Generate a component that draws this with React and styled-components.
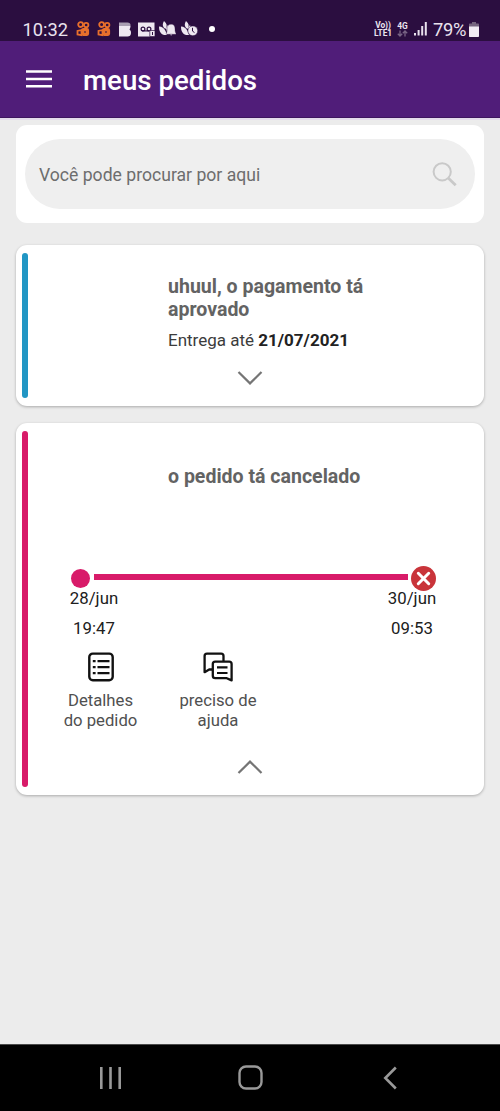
import React from 'react';
import styled, { createGlobalStyle } from 'styled-components';

const GlobalStyle = createGlobalStyle`
* {
    box-sizing: border-box;
}

body {
    margin: 0;
    background: #ececec;
    font-family: Roboto, "Noto Sans", sans-serif;
}

svg {
    display: block;
    flex: none;
}
`;

const Screen = styled.div`
    width: 100%;
    min-height: 1111px;
    display: flex;
    flex-direction: column;
    background: #ececec;
`;

const StatusBar = styled.div`
    height: 41px;
    padding: 17px 21px 0 22.5px;
    display: flex;
    justify-content: space-between;
    align-items: flex-start;
    background: #2b0e40;
    color: #e9e2ee;
`;

const StatusGroup = styled.div`
    height: 24px;
    display: flex;
    align-items: center;
`;

const Clock = styled.span`
    width: 46px;
    margin-right: 7.5px;
    font-size: 18.3px;
    white-space: nowrap;
`;

const Notifications = styled.div`
    display: grid;
    grid-template-columns: 21px 22px 19px 21px 22px 28px 6px;
    align-items: center;
`;

const Dot = styled.div`
    width: 6px;
    height: 6px;
    border-radius: 50%;
    background: #fff;
`;

const Network = styled.div`
    width: ${({ $width }) => $width}px;
    margin-right: ${({ $gap }) => $gap}px;
    display: flex;
    flex-direction: column;
    align-items: center;
    font-size: 8.4px;
    font-weight: 700;
    line-height: 8px;
    letter-spacing: -0.1px;
    white-space: nowrap;
`;

const Percent = styled.span`
    width: 33px;
    margin: 0 3px 0 6px;
    font-size: 18.4px;
    letter-spacing: -0.3px;
`;

const Header = styled.header`
    height: 77px;
    padding: 0 26px;
    display: flex;
    align-items: center;
    gap: 31px;
    background: #501d79;
    border-bottom: 1px solid #3e155f;

    h1 {
        margin: 0;
        padding-top: 3px;
        color: #fff;
        font-size: 27.7px;
        font-weight: 500;
        line-height: 34px;
    }
`;

const Content = styled.main`
    flex: 1;
    padding: 5px 16px 0;
    border-top: 2px solid #e4dcec;
`;

const SearchCard = styled.div`
    height: 98px;
    padding: 14px 9px;
    border-radius: 11px;
    background: #fff;
`;

const SearchField = styled.div`
    height: 70px;
    padding: 1px 18px 0 14px;
    display: flex;
    align-items: center;
    justify-content: space-between;
    border-radius: 35px;
    background: #efefef;
    color: #6d6d6d;
    font-size: 17.6px;
    line-height: 22px;
`;

const Card = styled.section`
    height: ${({ $height }) => $height}px;
    margin-top: ${({ $top }) => $top}px;
    padding: 8px 6px;
    display: flex;
    border-radius: 11px;
    background: #fff;
    box-shadow: 0 1px 3px rgba(0, 0, 0, 0.28);
`;

const Stripe = styled.div`
    width: 6px;
    flex: none;
    border-radius: 3px;
    background: ${({ $color }) => $color};
`;

const CardBody = styled.div`
    flex: 1;
    display: flex;
    flex-direction: column;
    padding-top: ${({ $top }) => $top}px;
`;

const Title = styled.h2`
    width: 230px;
    margin: 0 0 0 140px;
    color: #636363;
    font-size: 19.55px;
    font-weight: 700;
    line-height: 23px;
`;

const Delivery = styled.p`
    margin: 8px 0 0 140px;
    color: #3c3c3c;
    font-size: 17px;
    line-height: 22px;

    b {
        color: #222;
    }
`;

const Toggle = styled.div`
    margin-top: ${({ $top }) => $top}px;
    padding-left: 209px;
`;

const Track = styled.div`
    height: 26px;
    margin: 77px 42px 0 43px;
    display: flex;
    align-items: center;
`;

const StartDot = styled.div`
    width: 19px;
    height: 19px;
    margin-right: 4px;
    border-radius: 50%;
    background: #d81b69;
`;

const Line = styled.div`
    flex: 1;
    height: 6px;
    margin: 0 3px 2px 0;
    background: #d81b69;
`;

const Dates = styled.div`
    margin: -7px 35px 0 35px;
    display: flex;
    justify-content: space-between;
`;

const DateTime = styled.div`
    width: 62px;
    color: #202020;
    font-size: 16.8px;
    line-height: 29.5px;
    text-align: center;
`;

const Actions = styled.div`
    margin: 9px 0 0 22px;
    display: flex;
    gap: 16.5px;
`;

const Action = styled.div`
    width: 101px;
    display: flex;
    flex-direction: column;
    align-items: center;
    gap: 9px;
    color: #505050;
    font-size: 16.7px;
    line-height: 19.5px;
    text-align: center;
`;

const NavBar = styled.nav`
    height: 67px;
    padding-bottom: 1px;
    display: grid;
    grid-template-columns: repeat(3, 140px);
    align-items: center;
    justify-content: center;
    justify-items: center;
    border-top: 1px solid #4b4b4b;
    background: #000;
`;

const AppGlyph = () => (
    <svg width="14" height="16" viewBox="0 0 14 16" fill="none" stroke="#e8702c" strokeWidth="1.8">
        <circle cx="4.6" cy="3.6" r="2.4" />
        <circle cx="10.2" cy="4" r="2.2" />
        <rect x="6" y="8" width="6.2" height="6" rx="1.2" fill="#e8702c" />
        <path d="M5.5 9 1.5 10v3.5l4 .7z" />
        <path d="M8 11h2" stroke="#2b0e40" strokeWidth="1" />
    </svg>
)

const NoteGlyph = () => (
    <svg width="13" height="15" viewBox="0 0 13 15">
        <path d="M0 .5h8.5c2 0 3 1 3 2.5v1H0z" fill="#a99eb2" />
        <path d="M0 4h11.5c0 1.7-.5 2.5-1 3.5 1 .8 1.5 1.7 1.5 3.4 0 2.200-1.500 3.600-3.500 3.600H0z" fill="#eee8f1" />
    </svg>
)

const VoicemailGlyph = () => (
    <svg width="18" height="15" viewBox="0 0 18 15">
        <path d="M0 .5h16.5v14H0z" fill="#eee8f1" />
        <g fill="none" stroke="#2b0e40" strokeWidth="1.2">
            <circle cx="5" cy="7" r="1.9" />
            <circle cx="11" cy="7" r="1.9" />
            <path d="M4 8.9h7" />
        </g>
        <path d="M11.8 8.5H17v6h-5.2z" fill="#eee8f1" stroke="#2b0e40" strokeWidth=".7" />
        <path d="M14.5 10v3" stroke="#2b0e40" />
    </svg>
)

const Leaf = () => (
    <g fill="#eee8f1">
        <path d="M5 0c3 2.5 3.5 5 1.5 8C3.5 6 3 3.5 5 0z" />
        <path d="M0 5.5c3 0 5 1.5 6.5 4.5L8 14H5C1.5 13 0 10 0 5.5z" />
        <path d="M7 7 9 4l1 3-2 4z" />
    </g>
)

const LeafBellGlyph = () => (
    <svg width="17" height="16" viewBox="0 0 17 16">
        <Leaf />
        <path d="M12 3.2c3 0 4 2 4 4.8 0 2 .3 3.3 1 4.500v.8H7.200v-.8C8 11.300 8.200 10 8.200 8c0-2.800 1-4.800 3.800-4.800zM10.800 13.300h2.800l-1.400 1.500z" fill="#eee8f1" stroke="#2b0e40" strokeWidth=".3" />
    </svg>
)

const LeafClockGlyph = () => (
    <svg width="17" height="16" viewBox="0 0 17 16">
        <Leaf />
        <circle cx="11.8" cy="9.8" r="4.9" fill="#eee8f1" stroke="#2b0e40" strokeWidth=".5" />
        <path d="M11.5 6.8v3.3l2 1.5" fill="none" stroke="#2b0e40" strokeWidth="1" />
    </svg>
)

const DataArrows = () => (
    <svg width="11" height="7" viewBox="0 0 11 7" fill="none" stroke="#796585" strokeWidth="1.3">
        <path d="M3 .5V6M.8 3.7 3 6l2.2-2.3M8 6.5V1M5.8 3.3 8 1l2.2 2.3" />
    </svg>
)

const SignalIcon = () => (
    <svg width="13" height="14" viewBox="0 0 13 14" fill="#e9e2ee">
        <rect x="0" y="11" width="2" height="2.5" />
        <rect x="3.6" y="8" width="2" height="5.5" />
        <rect x="7.2" y="4" width="2" height="9.5" />
        <rect x="10.8" y="0" width="2" height="13.5" />
    </svg>
)

const BatteryIcon = () => (
    <svg width="10" height="15" viewBox="0 0 10 15">
        <path d="M3 0h4v1.5h2c.6 0 1 .4 1 1V5H0V2.5c0-.6.4-1 1-1h2z" fill="#75647f" />
        <path d="M0 4.5h10V14c0 .6-.4 1-1 1H1c-.6 0-1-.4-1-1z" fill="#f0eaf3" />
    </svg>
)

const Chevron = ({ up }) => (
    <svg width="26" height="14" viewBox="0 0 26 14" fill="none" stroke="#757575" strokeWidth="2.2">
        <path d={up ? 'M1.5 13 13 1.6 24.5 13' : 'M1.5 1 13 12.4 24.5 1'} />
    </svg>
)

const DetailsIcon = () => (
    <svg width="26" height="30" viewBox="0 0 26 30" fill="none" stroke="#111" strokeWidth="2.4">
        <rect x="1.3" y="1.6" width="23.4" height="26.6" rx="3.5" />
        <path d="M9.5 9.2h12M9.5 15.2h12M9.5 21.2h12M4.8 9.2h2.8M4.8 15.2h2.8M4.8 21.2h2.8" strokeWidth="2.2" />
    </svg>
)

const HelpIcon = () => (
    <svg width="30" height="30" viewBox="0 0 30 30" fill="none" stroke="#111" strokeWidth="2.3" strokeLinejoin="round">
        <path d="M20.5 9V4c0-1.5-.9-2.4-2.4-2.4H4C2.5 1.6 1.6 2.5 1.6 4v16.2l4.6-2.7h3.5" />
        <path d="M12.2 9.7h14c1.5 0 2.4.9 2.4 2.4v16.3l-4.8-2.2H12.2c-1.5 0-2.4-.9-2.4-2.4V12.100c0-1.500.9-2.400 2.400-2.400z" />
        <path d="M14 15.3h10.5M14 21h10.5" strokeWidth="2.2" />
    </svg>
)

const App = () => {
    return (
        <Screen>
            <GlobalStyle />
            <StatusBar>
                <StatusGroup>
                    <Clock>10:32</Clock>
                    <Notifications>
                        <AppGlyph />
                        <AppGlyph />
                        <NoteGlyph />
                        <VoicemailGlyph />
                        <LeafBellGlyph />
                        <LeafClockGlyph />
                        <Dot />
                    </Notifications>
                </StatusGroup>
                <StatusGroup>
                    <Network $width={18} $gap={5}>
                        <span>Vo))</span>
                        <span>LTE1</span>
                    </Network>
                    <Network $width={11} $gap={6}>
                        <span>4G</span>
                        <DataArrows />
                    </Network>
                    <SignalIcon />
                    <Percent>79%</Percent>
                    <BatteryIcon />
                </StatusGroup>
            </StatusBar>
            <Header>
                <svg width="26" height="20" viewBox="0 0 26 20" fill="none" stroke="#fff" strokeWidth="2.6">
                    <path d="M0 2.5h26M0 10h26M0 17.3h26" />
                </svg>
                <h1>meus pedidos</h1>
            </Header>
            <Content>
                <SearchCard>
                    <SearchField>
                        <span>Você pode procurar por aqui</span>
                        <svg width="25" height="25" viewBox="0 0 25 25" fill="none" stroke="#c9c9c9" strokeWidth="2">
                            <circle cx="10.2" cy="9.8" r="8.6" />
                            <path d="m16.2 16 7.5 7.2" strokeWidth="2.8" />
                        </svg>
                    </SearchField>
                </SearchCard>
                <Card $height={161} $top={22}>
                    <Stripe $color="#2196c4" />
                    <CardBody $top={22}>
                        <Title>uhuul, o pagamento tá aprovado</Title>
                        <Delivery>Entrega até <b>21/07/2021</b></Delivery>
                        <Toggle $top={20}>
                            <Chevron />
                        </Toggle>
                    </CardBody>
                </Card>
                <Card $height={372} $top={17}>
                    <Stripe $color="#d81b69" />
                    <CardBody $top={34}>
                        <Title>o pedido tá cancelado</Title>
                        <Track>
                            <StartDot />
                            <Line />
                            <svg width="25" height="25" viewBox="0 0 25 25">
                                <circle cx="12.5" cy="12.5" r="12.5" fill="#c9343a" />
                                <path d="m7.3 7.3 10.4 10.4M17.7 7.3 7.3 17.7" stroke="#fff" strokeWidth="3" strokeLinecap="round" />
                            </svg>
                        </Track>
                        <Dates>
                            <DateTime>28/jun<br />19:47</DateTime>
                            <DateTime>30/jun<br />09:53</DateTime>
                        </Dates>
                        <Actions>
                            <Action>
                                <DetailsIcon />
                                <span>Detalhes<br />do pedido</span>
                            </Action>
                            <Action>
                                <HelpIcon />
                                <span>preciso de<br />ajuda</span>
                            </Action>
                        </Actions>
                        <Toggle $top={30}>
                            <Chevron up />
                        </Toggle>
                    </CardBody>
                </Card>
            </Content>
            <NavBar>
                <svg width="23" height="24" viewBox="0 0 23 24" stroke="#999" strokeWidth="2.6">
                    <path d="M2.3 1v22M11.5 1v22M20.7 1v22" />
                </svg>
                <svg width="25" height="25" viewBox="0 0 25 25" fill="none" stroke="#999" strokeWidth="2.4">
                    <rect x="1.5" y="1.5" width="22" height="22" rx="6.5" />
                </svg>
                <svg width="14" height="24" viewBox="0 0 14 24" fill="none" stroke="#999" strokeWidth="2.6">
                    <path d="M12.8 1.5 2.3 12l10.5 10.5" />
                </svg>
            </NavBar>
        </Screen>
    );
};

export default App;
